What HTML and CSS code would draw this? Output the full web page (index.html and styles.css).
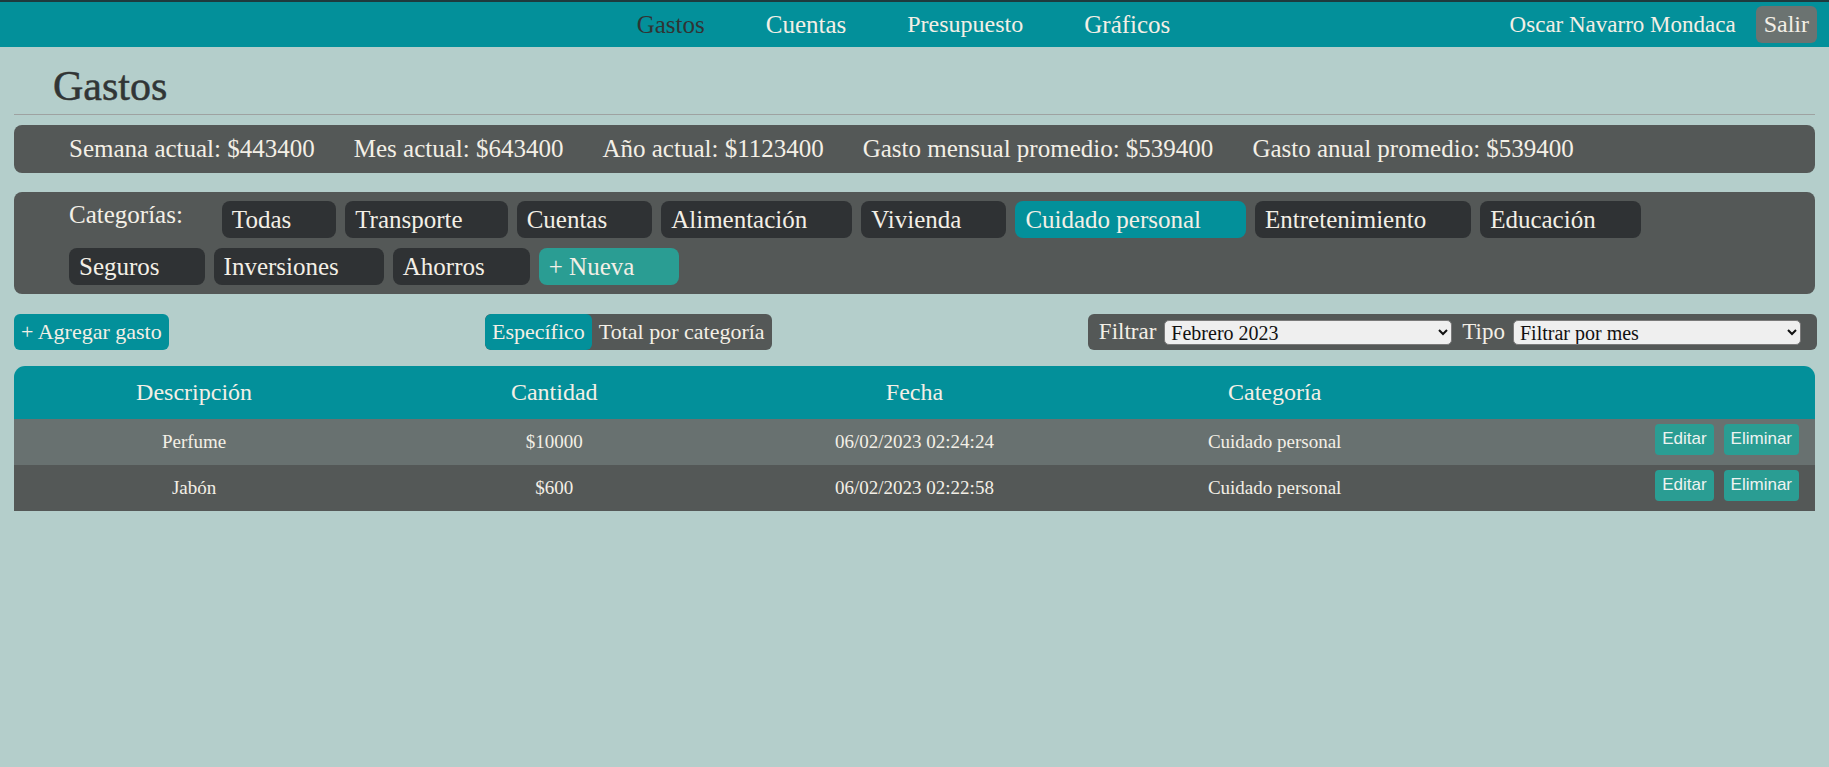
FILE: index.html
```html
<!DOCTYPE html>
<html lang="es">
<head>
<meta charset="utf-8">
<title>Gastos</title>
<link rel="stylesheet" href="styles.css">
</head>
<body>
<header class="navbar">
  <div class="nav-side"></div>
  <nav class="nav-links">
    <a class="nav-link active">Gastos</a>
    <a class="nav-link">Cuentas</a>
    <a class="nav-link">Presupuesto</a>
    <a class="nav-link">Gráficos</a>
  </nav>
  <div class="nav-user">
    <span class="user-name">Oscar Navarro Mondaca</span>
    <button class="btn-salir">Salir</button>
  </div>
</header>

<main class="page">
  <h1 class="page-title">Gastos</h1>
  <hr class="divider">

  <section class="panel stats">
    <span>Semana actual: $443400</span>
    <span>Mes actual: $643400</span>
    <span>Año actual: $1123400</span>
    <span>Gasto mensual promedio: $539400</span>
    <span>Gasto anual promedio: $539400</span>
  </section>

  <section class="panel categories">
    <span class="cat-label">Categorías:</span>
    <span class="chip">Todas</span>
    <span class="chip">Transporte</span>
    <span class="chip">Cuentas</span>
    <span class="chip">Alimentación</span>
    <span class="chip">Vivienda</span>
    <span class="chip chip-active">Cuidado personal</span>
    <span class="chip">Entretenimiento</span>
    <span class="chip">Educación</span>
    <span class="chip">Seguros</span>
    <span class="chip">Inversiones</span>
    <span class="chip">Ahorros</span>
    <span class="chip chip-new">+ Nueva</span>
  </section>

  <section class="actions">
    <button class="btn-add">+ Agregar gasto</button>
    <div class="toggle">
      <span class="toggle-opt toggle-on">Específico</span>
      <span class="toggle-opt">Total por categoría</span>
    </div>
    <div class="filter">
      <label class="filter-label">Filtrar</label>
      <select class="filter-select"><option>Febrero 2023</option></select>
      <label class="filter-label">Tipo</label>
      <select class="filter-select"><option>Filtrar por mes</option></select>
    </div>
  </section>

  <div class="table-wrap">
    <table class="expenses">
      <thead>
        <tr>
          <th>Descripción</th>
          <th>Cantidad</th>
          <th>Fecha</th>
          <th>Categoría</th>
          <th></th>
        </tr>
      </thead>
      <tbody>
        <tr class="row-light">
          <td>Perfume</td>
          <td>$10000</td>
          <td>06/02/2023 02:24:24</td>
          <td>Cuidado personal</td>
          <td class="row-actions"><button class="btn-small">Editar</button><button class="btn-small">Eliminar</button></td>
        </tr>
        <tr class="row-dark">
          <td>Jabón</td>
          <td>$600</td>
          <td>06/02/2023 02:22:58</td>
          <td>Cuidado personal</td>
          <td class="row-actions"><button class="btn-small">Editar</button><button class="btn-small">Eliminar</button></td>
        </tr>
      </tbody>
    </table>
  </div>
</main>
</body>
</html>
```

FILE: styles.css
```css
* { box-sizing: border-box; }

body {
  margin: 0;
  background: #b4cecb;
  font-family: "Liberation Serif", "Times New Roman", serif;
  color: #f3efe6;
}

button {
  font-family: inherit;
  border: none;
  cursor: pointer;
}

/* ---------- navbar ---------- */
.navbar {
  height: 47px;
  border-top: 2px solid #1e3a3e;
  background: #03909a;
  display: grid;
  grid-template-columns: 1fr auto 1fr;
  align-items: center;
  padding: 0 12px 0 0;
}

.nav-links {
  display: flex;
  gap: 61px;
  margin-left: -10px;
}

.nav-link {
  font-size: 25px;
  color: #f3efe6;
  text-decoration: none;
}

.nav-link:nth-child(3) { font-size: 24px; }

.nav-link.active { color: #303434; }

.nav-user {
  justify-self: end;
  display: flex;
  align-items: center;
  gap: 20px;
}

.user-name { font-size: 23px; }

.btn-salir {
  height: 37px;
  padding: 0 8px;
  border-radius: 6px;
  background: #6b7371;
  color: #f3efe6;
  font-size: 24px;
}

/* ---------- page ---------- */
.page {
  padding: 0 14px;
}

.page-title {
  margin: 15px 0 4px 39px;
  font-size: 42px;
  line-height: 48px;
  font-weight: normal;
  color: #313535;
  -webkit-text-stroke: 0.5px #313535;
}

.divider {
  margin: 0;
  border: none;
  border-top: 1px solid #9ea2a1;
}

.panel {
  background: #545857;
  border-radius: 8px;
}

.stats {
  margin-top: 10px;
  height: 48px;
  padding: 0 55px;
  display: flex;
  align-items: center;
  gap: 39px;
  font-size: 25px;
}

.categories {
  margin-top: 19px;
  padding: 9px 55px;
  display: flex;
  flex-wrap: wrap;
  align-items: flex-start;
  column-gap: 9px;
  row-gap: 10px;
}

.cat-label {
  font-size: 25px;
  margin-right: 30px;
}

.chip {
  height: 37px;
  line-height: 37px;
  padding: 0 45px 0 10px;
  border-radius: 8px;
  background: #2f3234;
  font-size: 25px;
}

.chip-active { background: #03909a; }
.chip-new { background: #2a9d93; }

/* ---------- actions ---------- */
.actions {
  margin-top: 20px;
  display: flex;
  justify-content: space-between;
  align-items: center;
}

.btn-add {
  height: 36px;
  padding: 0 7px;
  border-radius: 6px;
  background: #03909a;
  color: #f3efe6;
  font-size: 22px;
}

.toggle {
  display: flex;
  height: 36px;
  border-radius: 6px;
  overflow: hidden;
  background: #545857;
}

.toggle-opt {
  line-height: 36px;
  padding: 0 7px;
  font-size: 22px;
}

.toggle-on { background: #03909a; border-radius: 6px; }

.filter {
  height: 36px;
  display: flex;
  align-items: center;
  gap: 8px;
  padding: 0 16px 0 11px;
  border-radius: 6px;
  background: #545857;
  margin-right: -2px;
}

.filter-label { font-size: 23px; }

.filter-select {
  width: 288px;
  height: 25px;
  border: 1px solid #7a7a7a;
  border-radius: 5px;
  background: #efefef;
  font-family: "Liberation Serif", serif;
  font-size: 20px;
  color: #111;
  padding: 0 2px;
}

.filter-select + .filter-label { margin-left: 2px; }

/* ---------- table ---------- */
.table-wrap {
  margin-top: 16px;
  border-radius: 11px 11px 0 0;
  overflow: hidden;
}

.expenses {
  width: 100%;
  border-collapse: collapse;
  table-layout: fixed;
}

.expenses th {
  height: 53px;
  background: #03909a;
  font-weight: normal;
  font-size: 24px;
  padding: 0;
  text-align: center;
}

.expenses td {
  height: 46px;
  padding: 0;
  font-size: 19px;
  text-align: center;
}

.row-light td { background: #687170; }
.row-dark td { background: #545857; }

.expenses td.row-actions {
  text-align: right;
  padding: 0 16px 6px 0;
}

.btn-small {
  height: 31px;
  padding: 0 7px;
  margin-left: 10px;
  border-radius: 4px;
  background: #2a9d93;
  color: #eef3f1;
  font-family: "Liberation Sans", Arial, sans-serif;
  font-size: 17px;
  vertical-align: middle;
}
```
